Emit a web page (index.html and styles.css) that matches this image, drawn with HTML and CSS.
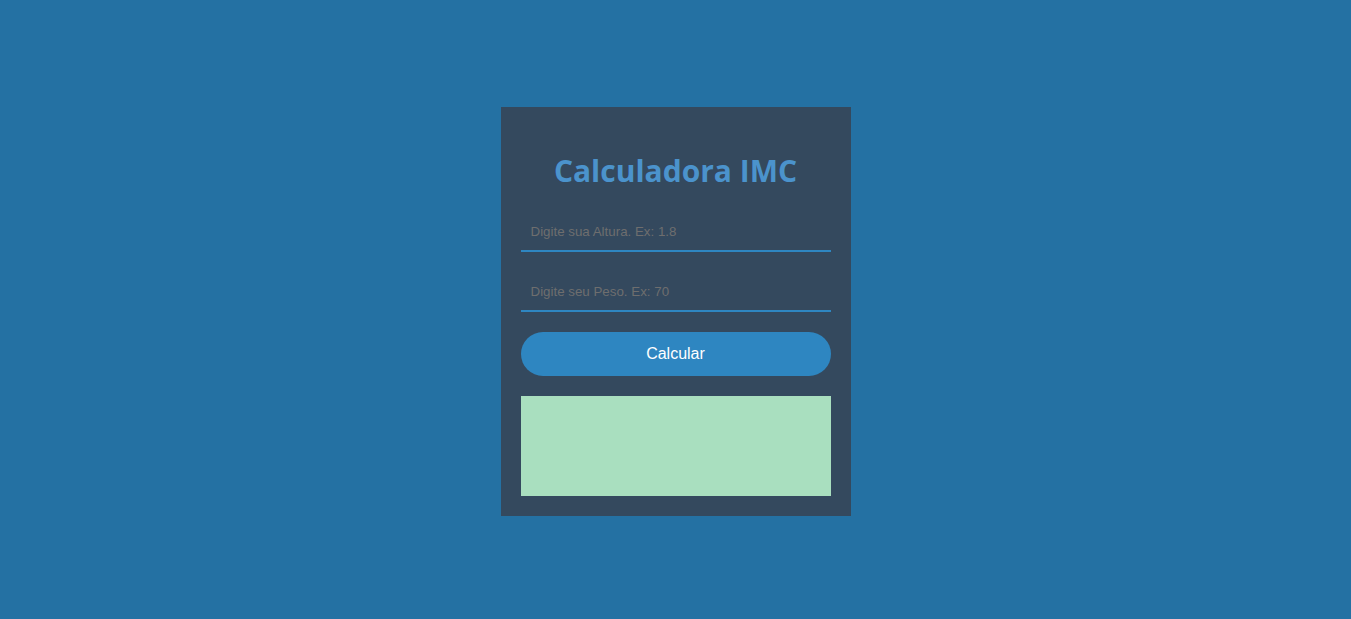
FILE: index.html
```html
<!DOCTYPE html>
<html lang="pt-BR">
<head>
<meta charset="utf-8">
<title>Calculadora IMC</title>
<link rel="stylesheet" href="styles.css">
</head>
<body>
<main class="page">
  <section class="card">
    <h1 class="title">Calculadora IMC</h1>
    <input class="field" type="text" placeholder="Digite sua Altura. Ex: 1.8">
    <input class="field" type="text" placeholder="Digite seu Peso. Ex: 70">
    <button class="btn" type="button">Calcular</button>
    <div class="result"></div>
  </section>
</main>
</body>
</html>
```

FILE: styles.css
```css
* { box-sizing: border-box; }
html, body {
  margin: 0;
  height: 100%;
}
body {
  background: #2471a3;
  font-family: "Liberation Sans", Arial, sans-serif;
}
.page {
  height: 100%;
  display: flex;
  align-items: flex-start;
  justify-content: center;
  padding-top: 107px;
}
.card {
  width: 350px;
  background: #34495e;
  padding: 20px;
  display: flex;
  flex-direction: column;
  gap: 20px;
}
.title {
  margin: 25px 0 0;
  height: 40px;
  line-height: 38px;
  text-align: center;
  font-family: "Open Sans", sans-serif;
  font-weight: 700;
  font-size: 30px;
  color: #4b93cc;
}
.field {
  height: 40px;
  width: 100%;
  background: transparent;
  border: none;
  border-bottom: 2px solid #2e86c1;
  padding: 0 10px;
  font-family: "Liberation Sans", Arial, sans-serif;
  font-size: 13.333px;
  color: #ddd;
  outline: none;
}
.field::placeholder {
  color: #6e6e6e;
}
.btn {
  height: 44px;
  width: 100%;
  border: none;
  border-radius: 22px;
  background: #2e86c1;
  color: #fff;
  font-family: "Liberation Sans", Arial, sans-serif;
  font-size: 16px;
}
.result {
  height: 100px;
  background: #a9dfbf;
}
```
